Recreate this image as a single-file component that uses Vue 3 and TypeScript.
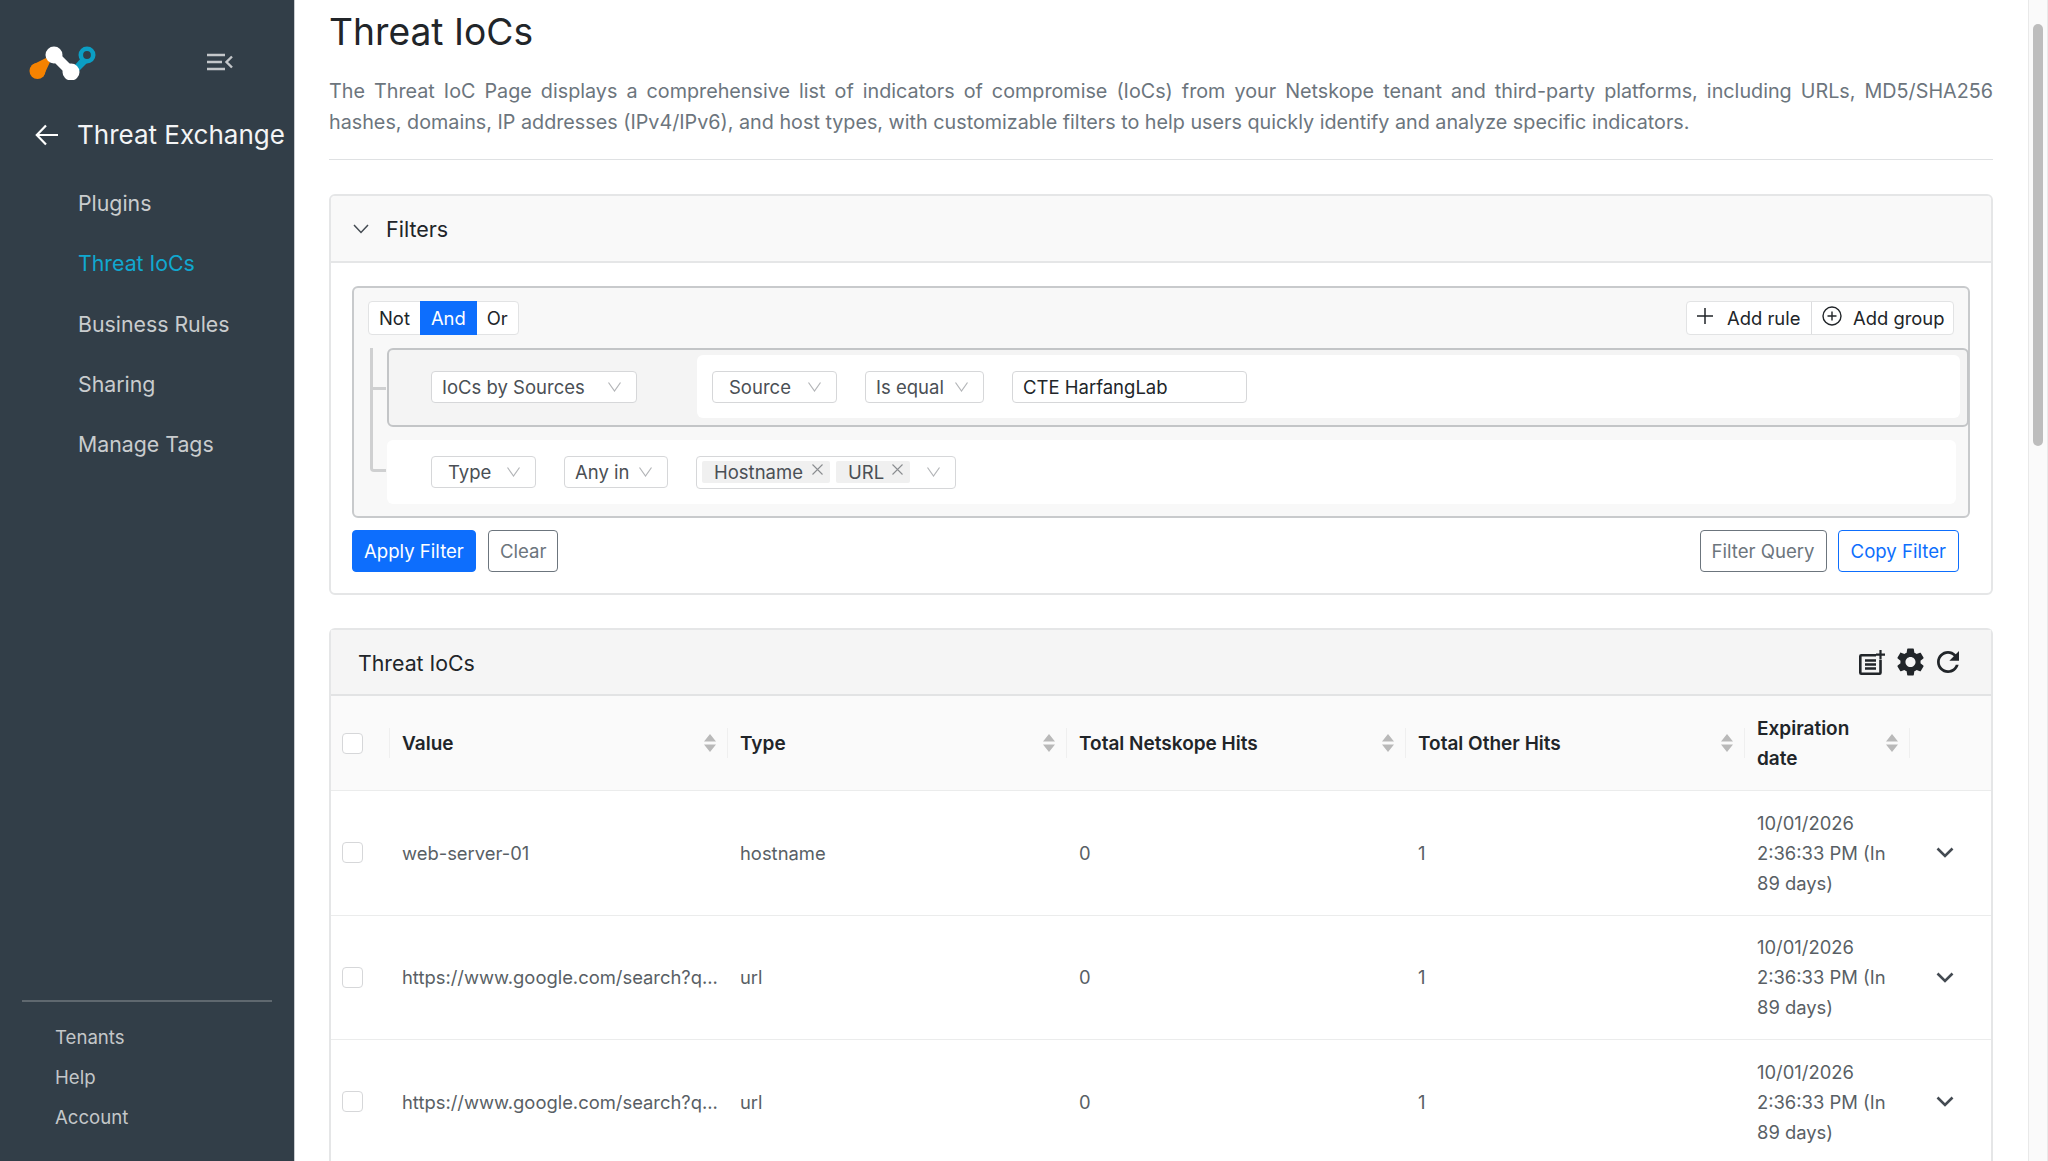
<script setup lang="ts">
const navItems = [
  { label: "Plugins", active: false },
  { label: "Threat IoCs", active: true },
  { label: "Business Rules", active: false },
  { label: "Sharing", active: false },
  { label: "Manage Tags", active: false },
];

const footerLinks = ["Tenants", "Help", "Account"];

const columns = ["Value", "Type", "Total Netskope Hits", "Total Other Hits"];

const rows = [
  { value: "web-server-01", type: "hostname" },
  { value: "https://www.google.com/search?q...", type: "url" },
  { value: "https://www.google.com/search?q...", type: "url" },
];
</script>

<template>
  <div class="page">
    <aside class="sidebar">
      <div class="brand">
        <svg class="logo" width="68" height="36" viewBox="0 0 68 36">
          <path d="M3 21 L17 14 L21 18 L14 33 Z" fill="#f58200" />
          <circle cx="8.5" cy="27" r="8" fill="#f58200" />
          <path d="M45 22 L53 13 L60 17 L49 28 Z" fill="#0b9ec4" />
          <circle cx="58" cy="11" r="6.2" fill="#323e48" stroke="#0b9ec4" stroke-width="4.6" />
          <path d="M25 11 L42 28" stroke="#fff" stroke-width="10" fill="none" />
          <circle cx="25" cy="11" r="8.5" fill="#fff" />
          <circle cx="42" cy="28" r="8.5" fill="#fff" />
        </svg>
        <svg class="collapse" width="26" height="18" viewBox="0 0 26 18" fill="none" stroke="#c4c7ca" stroke-width="2.4">
          <path d="M0 2H18M0 9H15M0 16H18" />
          <path d="M25 3.5 L19.5 9 L25 14.5" />
        </svg>
      </div>
      <div class="module">
        <svg width="24" height="22" viewBox="0 0 24 22" fill="none" stroke="#fff" stroke-width="2.2">
          <path d="M23 11H2M11 1.5 L1.8 11 L11 20.5" />
        </svg>
        <span>Threat Exchange</span>
      </div>
      <nav class="nav">
        <a v-for="item in navItems" :key="item.label" class="nav-item" :class="{ active: item.active }">{{ item.label }}</a>
      </nav>
      <div class="side-foot">
        <a v-for="link in footerLinks" :key="link" class="foot-link">{{ link }}</a>
      </div>
    </aside>

    <main class="main">
      <h1 class="title">Threat IoCs</h1>
      <p class="lead">
        The Threat IoC Page displays a comprehensive list of indicators of compromise (IoCs) from your Netskope tenant and third-party platforms, including URLs, MD5/SHA256 hashes, domains, IP addresses (IPv4/IPv6), and host types, with customizable filters to help users quickly identify and analyze specific indicators.
      </p>
      <hr class="rule" />

      <section class="card filters">
        <header class="filters-head">
          <svg width="16" height="10" viewBox="0 0 16 10" fill="none" stroke="#444b52" stroke-width="1.5">
            <path d="M1 1 L8 8.5 L15 1" />
          </svg>
          <span>Filters</span>
        </header>
        <div class="filters-body">
          <div class="builder">
            <div class="builder-top">
              <div class="btn-group">
                <span class="seg">Not</span>
                <span class="seg on">And</span>
                <span class="seg">Or</span>
              </div>
              <div class="btn-group">
                <span class="seg add add-rule">
                  <svg width="16" height="16" viewBox="0 0 16 16" fill="none" stroke="#212529" stroke-width="1.5"><path d="M8 0V16M0 8H16" /></svg>
                  Add rule
                </span>
                <span class="seg add add-group">
                  <svg width="20" height="20" viewBox="0 0 20 20" fill="none" stroke="#212529" stroke-width="1.4"><circle cx="10" cy="10" r="9" /><path d="M10 5.5V14.5M5.5 10H14.5" /></svg>
                  Add group
                </span>
              </div>
            </div>

            <div class="tree">
              <div class="rule-group">
                <span class="select sel-source">IoCs by Sources
                  <svg class="chev" width="13" height="10" viewBox="0 0 13 10" fill="none" stroke="#b3b5b8" stroke-width="1.2"><path d="M.5 .5 L6.5 9 L12.5 .5" /></svg>
                </span>
                <div class="rule-body">
                  <span class="select sel-field">Source
                    <svg class="chev" width="13" height="10" viewBox="0 0 13 10" fill="none" stroke="#b3b5b8" stroke-width="1.2"><path d="M.5 .5 L6.5 9 L12.5 .5" /></svg>
                  </span>
                  <span class="select sel-op">Is equal
                    <svg class="chev" width="13" height="10" viewBox="0 0 13 10" fill="none" stroke="#b3b5b8" stroke-width="1.2"><path d="M.5 .5 L6.5 9 L12.5 .5" /></svg>
                  </span>
                  <span class="input">CTE HarfangLab</span>
                </div>
              </div>
              <div class="rule-row">
                <span class="select sel-type">Type
                  <svg class="chev" width="13" height="10" viewBox="0 0 13 10" fill="none" stroke="#b3b5b8" stroke-width="1.2"><path d="M.5 .5 L6.5 9 L12.5 .5" /></svg>
                </span>
                <span class="select sel-any">Any in
                  <svg class="chev" width="13" height="10" viewBox="0 0 13 10" fill="none" stroke="#b3b5b8" stroke-width="1.2"><path d="M.5 .5 L6.5 9 L12.5 .5" /></svg>
                </span>
                <span class="multi">
                  <span class="tag hostname">Hostname
                    <svg class="x" width="11" height="11" viewBox="0 0 11 11" fill="none" stroke="#8a8d90" stroke-width="1.1"><path d="M.5 .5 L10.5 10.5M10.5 .5 L.5 10.5" /></svg>
                  </span>
                  <span class="tag url">URL
                    <svg class="x" width="11" height="11" viewBox="0 0 11 11" fill="none" stroke="#8a8d90" stroke-width="1.1"><path d="M.5 .5 L10.5 10.5M10.5 .5 L.5 10.5" /></svg>
                  </span>
                  <svg class="chev" width="13" height="10" viewBox="0 0 13 10" fill="none" stroke="#b3b5b8" stroke-width="1.2"><path d="M.5 .5 L6.5 9 L12.5 .5" /></svg>
                </span>
              </div>
            </div>
          </div>

          <div class="actions">
            <button class="btn primary">Apply Filter</button>
            <button class="btn muted">Clear</button>
            <span class="spacer"></span>
            <button class="btn muted">Filter Query</button>
            <button class="btn outline">Copy Filter</button>
          </div>
        </div>
      </section>

      <section class="card results">
        <header class="results-head">
          <span class="results-title">Threat IoCs</span>
          <div class="tools">
            <svg width="26" height="25" viewBox="0 0 26 25" fill="none" stroke="#212529" stroke-width="2.6">
              <path d="M17 5.3H2.3A1 1 0 0 0 1.3 6.3V22.7A1 1 0 0 0 2.3 23.7H20.5A1 1 0 0 0 21.5 22.7V10" />
              <path d="M6 10.5H17M6 14.5H17M6 18.5H17" />
              <path d="M21.5 0V9.5M17 4.7H26" stroke-width="2.2" />
            </svg>
            <svg width="27" height="28" viewBox="2.6 2 18.8 20" fill="#212529">
              <path d="M19.14 12.94c.04-.3.06-.61.06-.94 0-.32-.02-.64-.07-.94l2.03-1.58c.18-.14.23-.41.12-.61l-1.92-3.32c-.12-.22-.37-.29-.59-.22l-2.39.96c-.5-.38-1.03-.7-1.62-.94l-.36-2.54c-.04-.24-.24-.41-.48-.41h-3.84c-.24 0-.43.17-.47.41l-.36 2.54c-.59.24-1.13.57-1.62.94l-2.39-.96c-.22-.08-.47 0-.59.22L2.74 8.87c-.12.21-.08.47.12.61l2.03 1.58c-.05.3-.09.63-.09.94s.02.64.07.94l-2.03 1.58c-.18.14-.23.41-.12.61l1.92 3.32c.12.22.37.29.59.22l2.39-.96c.5.38 1.03.7 1.62.94l.36 2.54c.05.24.24.41.48.41h3.84c.24 0 .44-.17.47-.41l.36-2.54c.59-.24 1.13-.56 1.62-.94l2.39.96c.22.08.47 0 .59-.22l1.92-3.32c.12-.22.07-.47-.12-.61l-2.01-1.58zM12 15.6c-1.98 0-3.6-1.62-3.6-3.6s1.62-3.6 3.6-3.6 3.6 1.62 3.6 3.6-1.62 3.6-3.6 3.6z" />
            </svg>
            <svg class="refresh" width="22" height="22" viewBox="4 4 16 16" fill="#212529">
              <path d="M17.65 6.35C16.2 4.9 14.21 4 12 4c-4.42 0-7.99 3.58-7.99 8s3.57 8 7.99 8c3.73 0 6.84-2.55 7.73-6h-2.08c-.82 2.33-3.04 4-5.65 4-3.31 0-6-2.69-6-6s2.69-6 6-6c1.66 0 3.14.69 4.22 1.78L13 11h7V4l-2.35 2.35z" />
            </svg>
          </div>
        </header>

        <div class="grid head">
          <div class="cell"><span class="check"></span></div>
          <div v-for="col in columns" :key="col" class="cell sortable">
            <span class="col-name">{{ col }}</span>
            <svg class="sort" width="12" height="18" viewBox="0 0 12 18" fill="#b9b9b9"><path d="M6 0 L12 7.5 H0 Z M0 10.5 H12 L6 18 Z" /></svg>
          </div>
          <div class="cell sortable">
            <span class="col-name exp">Expiration date</span>
            <svg class="sort" width="12" height="18" viewBox="0 0 12 18" fill="#b9b9b9"><path d="M6 0 L12 7.5 H0 Z M0 10.5 H12 L6 18 Z" /></svg>
          </div>
          <div class="cell"></div>
        </div>

        <div v-for="(row, i) in rows" :key="i" class="grid body">
          <div class="cell"><span class="check"></span></div>
          <div class="cell nowrap">{{ row.value }}</div>
          <div class="cell">{{ row.type }}</div>
          <div class="cell">0</div>
          <div class="cell">1</div>
          <div class="cell date">10/01/2026 2:36:33 PM (In 89 days)</div>
          <div class="cell expander">
            <svg width="18" height="11" viewBox="0 0 18 11" fill="none" stroke="#444b52" stroke-width="2.6"><path d="M1.5 1.5 L9 9 L16.5 1.5" /></svg>
          </div>
        </div>
      </section>
    </main>

    <div class="scrollbar"><span class="thumb"></span></div>
  </div>
</template>

<style>
html,
body {
  margin: 0;
  height: 100%;
  overflow: hidden;
}
</style>

<style scoped>
.page {
  display: flex;
  width: 2048px;
  height: 1161px;
  overflow: hidden;
  background: #fff;
  color: #212529;
  font-family: Inter, "Liberation Sans", sans-serif;
  font-size: 18.4px;
}

/* sidebar */
.sidebar {
  flex: 0 0 295px;
  min-width: 0;
  display: flex;
  flex-direction: column;
  background: #323e48;
  color: #e4e6e8;
  border-right: 1px solid #c9ccd0;
  box-sizing: border-box;
}
.brand {
  display: flex;
  align-items: center;
  height: 36px;
  margin-top: 44px;
  padding-left: 29px;
}
.collapse {
  margin-left: 110px;
}
.module {
  display: flex;
  align-items: center;
  gap: 18px;
  margin-top: 37px;
  padding-left: 35px;
  color: #f3f4f5;
  font-size: 26px;
  line-height: 36px;
  white-space: nowrap;
}
.nav {
  display: flex;
  flex-direction: column;
  margin-top: 20px;
}
.nav-item {
  padding-left: 78px;
  height: 60.3px;
  line-height: 60px;
  font-size: 21.3px;
  color: #c9ccce;
}
.nav-item.active {
  color: #10a8d0;
}
.side-foot {
  margin: auto 22px 0;
  padding: 15px 0 24px 33px;
  border-top: 2px solid #5f686f;
  display: flex;
  flex-direction: column;
}
.foot-link {
  height: 40px;
  line-height: 40px;
  font-size: 18.6px;
  color: #c4c7c9;
}

/* main column */
.main {
  flex: 1;
  min-width: 0;
  padding: 0 35px 0 34px;
  box-sizing: border-box;
}
.title {
  margin: 8px 0 0;
  font-size: 37.2px;
  line-height: 48px;
  font-weight: 400;
}
.lead {
  margin: 20px 0 0;
  font-size: 19.75px;
  line-height: 31px;
  color: #6c757d;
  text-align: justify;
}
.rule {
  margin: 21px 0 0;
  border: 0;
  border-top: 1px solid #dfe1e3;
}
.card {
  border: 2px solid #e5e6e7;
  border-radius: 6px;
  box-sizing: border-box;
}
.filters {
  margin-top: 34px;
  height: 401px;
}
.filters-head {
  display: flex;
  align-items: center;
  gap: 17px;
  height: 65px;
  padding-left: 22px;
  background: #f9f9f9;
  border-bottom: 2px solid #e5e6e7;
  border-radius: 4px 4px 0 0;
  font-size: 21.5px;
}
.filters-body {
  padding: 23px 21px 0;
}
.builder {
  position: relative;
  width: 1618px;
  height: 232px;
  border: 2px solid #c8cacc;
  border-radius: 6px;
  background: #f8f8f8;
  box-sizing: border-box;
}
.builder-top {
  display: flex;
  justify-content: space-between;
  padding: 13px 14px 0 14px;
}
.btn-group {
  display: flex;
  height: 32px;
  background: #fff;
  border: 1px solid #e2e3e4;
  border-radius: 4px;
}
.seg {
  display: flex;
  align-items: center;
  padding: 0 10px;
  font-size: 18.4px;
}
.seg.on {
  background: #0d6efd;
  color: #fff;
  height: 34px;
  margin-top: -1px;
  padding: 0 11px;
}
.seg.add {
  box-sizing: border-box;
  padding-left: 10px;
  padding-right: 0;
}
.add-rule {
  width: 124px;
  gap: 14px;
}
.add-group {
  width: 142px;
  gap: 11px;
  border-left: 1px solid #dcdddf;
}
.seg.add svg {
  margin-top: -4px;
}

.tree {
  position: relative;
  margin-top: 13px;
}
/* connector lines between the rule groups */
.tree::before {
  content: "";
  position: absolute;
  left: 16px;
  top: 0;
  width: 16px;
  height: 124px;
  border-left: 3px solid #cfd0d1;
  border-bottom: 3px solid #cfd0d1;
  border-bottom-left-radius: 4px;
  box-sizing: border-box;
}
.tree::after {
  content: "";
  position: absolute;
  left: 16px;
  top: 39px;
  width: 16px;
  height: 3px;
  background: #cfd0d1;
}
.rule-group {
  position: relative;
  display: flex;
  align-items: center;
  margin: 0 0 0 33px;
  height: 79px;
  width: 1582px;
  background: #f4f4f4;
  border: 2px solid #c3c5c7;
  border-radius: 6px;
  box-sizing: border-box;
  padding: 0 0 2px 42px;
}
.rule-body {
  display: flex;
  align-items: center;
  flex: 1;
  height: 63px;
  margin-left: 60px;
  margin-right: 7px;
  padding-left: 15px;
  background: #fff;
  border-radius: 6px;
}
.rule-row {
  display: flex;
  align-items: center;
  margin: 13px 0 0 33px;
  width: 1569px;
  height: 64px;
  padding-left: 44px;
  background: #fff;
  border-radius: 6px;
  box-sizing: border-box;
}
.select,
.input,
.multi {
  position: relative;
  display: inline-flex;
  align-items: center;
  height: 32px;
  background: #fff;
  border: 1px solid #d6d7d9;
  border-radius: 4px;
  box-sizing: border-box;
  font-size: 18.5px;
  color: #4a4f55;
  white-space: nowrap;
}
.chev {
  position: absolute;
  right: 15px;
  top: 10px;
}
.select {
  padding-left: 10px;
}
.sel-source { width: 206px; }
.sel-field { width: 125px; padding-left: 16px; }
.sel-op { width: 119px; margin-left: 28px; }
.input { width: 235px; margin-left: 28px; padding-left: 10px; color: #212529; }
.sel-type { width: 105px; padding-left: 16px; }
.sel-any { width: 104px; margin-left: 28px; }
.multi {
  width: 260px;
  height: 33px;
  margin-left: 28px;
  padding-left: 5px;
  gap: 6px;
}
.tag {
  position: relative;
  display: inline-flex;
  align-items: center;
  height: 22px;
  padding-left: 12px;
  background: #f0f0f0;
  border-radius: 2px;
  box-sizing: border-box;
}
.tag.hostname { width: 128px; }
.tag.url { width: 74px; }
.x {
  position: absolute;
  right: 7px;
  top: 3px;
}

.actions {
  display: flex;
  align-items: center;
  gap: 11px;
  margin-top: 12px;
  width: 1607px;
}
.spacer {
  flex: 1;
}
.btn {
  height: 42px;
  padding: 0 11px;
  border-radius: 4px;
  background: #fff;
  font: inherit;
  font-size: 18.6px;
}
.btn.primary {
  background: #0d6efd;
  border: 1px solid #0d6efd;
  color: #fff;
  margin-right: 1px;
}
.btn.muted {
  border: 1.5px solid #6c757d;
  color: #6c757d;
}
.btn.outline {
  border: 1.5px solid #0d6efd;
  color: #0d6efd;
  padding: 0 12px;
}

/* results table */
.results {
  margin-top: 33px;
  border-bottom: 0;
  border-radius: 6px 6px 0 0;
}
.results-head {
  display: flex;
  align-items: center;
  justify-content: space-between;
  height: 64px;
  padding: 0 32px 0 27px;
  background: #f5f5f5;
  border-bottom: 2px solid #e2e3e4;
  font-size: 21.3px;
}
.results-title {
  padding-top: 2px;
}
.tools {
  display: flex;
  align-items: center;
  gap: 12px;
}
.refresh {
  margin-left: 1px;
}
.grid {
  display: grid;
  grid-template-columns: 59px 338px 339px 339px 339px 165px 1fr;
}
.grid.head {
  height: 94px;
  background: #fafafa;
  border-bottom: 1px solid #ebecec;
  font-size: 19px;
  font-weight: 600;
  line-height: 30px;
}
.col-name {
  padding-top: 2px;
}
.grid.body {
  height: 124.6px;
  box-sizing: border-box;
  border-bottom: 1px solid #ebecec;
  color: #595f65;
  line-height: 30px;
}
.cell {
  position: relative;
  display: flex;
  align-items: center;
  padding: 0 12px 0 11px;
  min-width: 0;
}
.grid .cell:not(:first-child) {
  padding-left: 12px;
}
.nowrap {
  white-space: nowrap;
}
.grid.head .cell:not(:last-child)::after {
  content: "";
  position: absolute;
  right: 0;
  top: 32px;
  height: 30px;
  border-right: 1px solid #efefef;
}
.sortable {
  justify-content: space-between;
}
.exp {
  width: 110px;
}
.check {
  width: 21px;
  height: 21px;
  background: #fff;
  border: 1px solid #d6d7d9;
  border-radius: 4px;
  box-sizing: border-box;
}
.sort {
  flex: none;
}
.expander {
  justify-content: flex-end;
  padding-right: 37px;
}

/* page scrollbar */
.scrollbar {
  flex: 0 0 20px;
  box-sizing: border-box;
  background: #fafafa;
  border-left: 1px solid #e9e9e9;
  border-right: 1px solid #e9e9e9;
  padding: 24px 4px 0;
}
.thumb {
  display: block;
  width: 10px;
  height: 422px;
  background: #bdbdbd;
  border-radius: 5px;
}
</style>
